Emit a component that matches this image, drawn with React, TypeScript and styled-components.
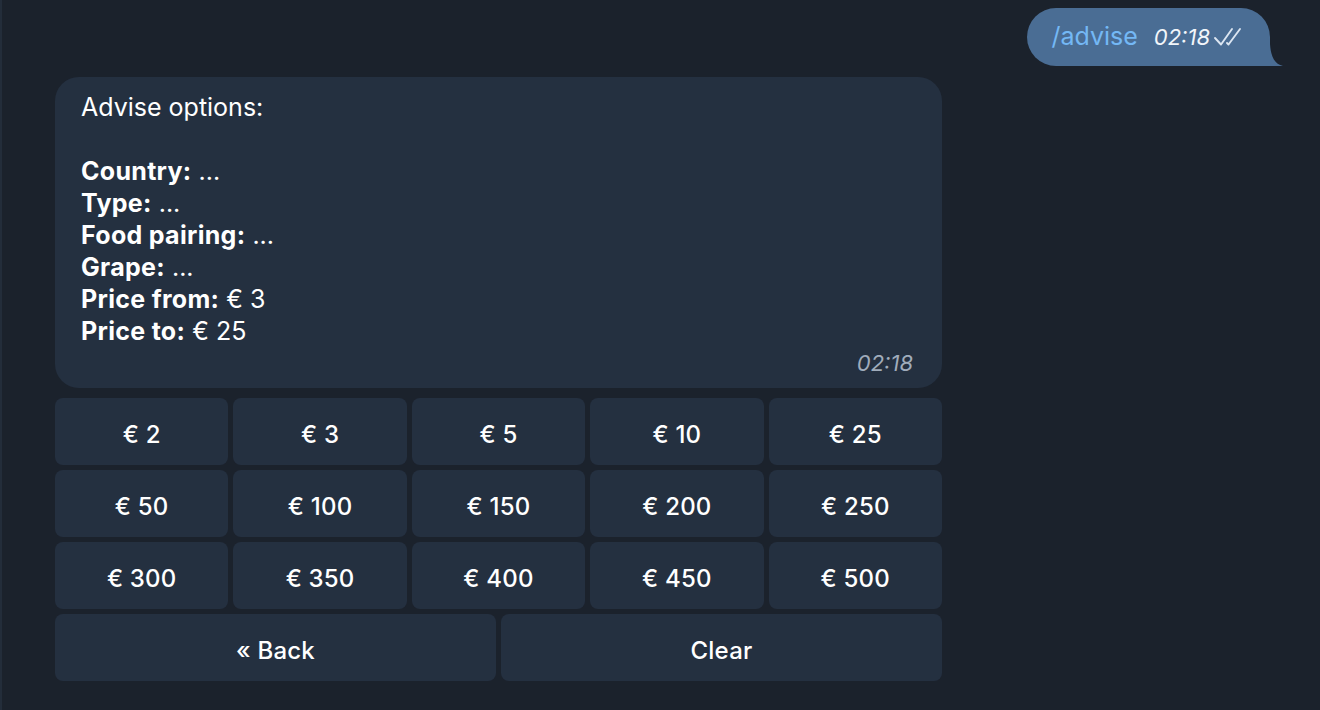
import React from "react";
import styled, { createGlobalStyle } from "styled-components";

const GlobalStyle = createGlobalStyle`
  html, body {
    margin: 0;
    padding: 0;
    background: #1b222c;
  }
  body {
    font-family: Inter, "Noto Sans", "Liberation Sans", sans-serif;
    color: #ffffff;
  }
`;

const prices = [
  ["€ 2", "€ 3", "€ 5", "€ 10", "€ 25"],
  ["€ 50", "€ 100", "€ 150", "€ 200", "€ 250"],
  ["€ 300", "€ 350", "€ 400", "€ 450", "€ 500"],
];

const options: [string, string][] = [
  ["Country:", "..."],
  ["Type:", "..."],
  ["Food pairing:", "..."],
  ["Grape:", "..."],
  ["Price from:", "€ 3"],
  ["Price to:", "€ 25"],
];

const App = () => {
  return (
    <Page>
      <GlobalStyle />
      <OutRow>
        <OutBubble>
          <Command>/advise</Command>
          <OutMeta>
            02:18
            <svg width="32" height="22" viewBox="0 0 32 22" fill="none">
              <path d="M3 12 L9 18.5 L20 3" stroke="#dce6f2" strokeWidth="1.9" strokeLinecap="round" strokeLinejoin="round" />
              <path d="M15 17 L16.5 18.5 L28 3" stroke="#dce6f2" strokeWidth="1.9" strokeLinecap="round" strokeLinejoin="round" />
            </svg>
          </OutMeta>
          <Tail viewBox="0 0 22 22">
            <path d="M0 0 L0 22 L22 22 C14 20 10 14 9 0 Z" fill="#4a6d94" />
          </Tail>
        </OutBubble>
      </OutRow>
      <InBlock>
        <InBubble>
          <Text>
            <Line>Advise options:</Line>
            <Line>&nbsp;</Line>
            {options.map(([k, v]) => (
              <Line key={k}>
                <b>{k}</b> {v}
              </Line>
            ))}
          </Text>
          <InTime>02:18</InTime>
        </InBubble>
        <Keyboard>
          {prices.map((row, i) => (
            <KeyRow key={i} $cols={5}>
              {row.map((p) => (
                <Key key={p}>{p}</Key>
              ))}
            </KeyRow>
          ))}
          <KeyRow $cols={2}>
            <Key>« Back</Key>
            <Key>Clear</Key>
          </KeyRow>
        </Keyboard>
      </InBlock>
    </Page>
  );
};

export default App;

const Page = styled.div`
  width: 1320px;
  height: 710px;
  box-sizing: border-box;
  border-left: 2px solid #232d3a;
  padding-top: 8px;
  display: flex;
  flex-direction: column;
  overflow: hidden;
`;
const OutRow = styled.div`
  display: flex;
  justify-content: flex-end;
  padding-right: 50px;
`;
const OutBubble = styled.div`
  position: relative;
  height: 58px;
  box-sizing: border-box;
  padding: 0 26px 0 24px;
  background: #4a6d94;
  border-radius: 29px 29px 0 29px;
  display: flex;
  align-items: center;
  gap: 16px;
`;
const Command = styled.span`
  color: #74b8f5;
  font-size: 25px;
  margin-top: -2px;
`;
const OutMeta = styled.span`
  display: flex;
  align-items: center;
  gap: 2px;
  font-size: 22px;
  font-style: italic;
  color: #f2f6fa;
  svg {
    margin-top: -1px;
  }
`;
const Tail = styled.svg`
  position: absolute;
  right: -13px;
  bottom: 0;
  width: 22px;
  height: 22px;
`;
const InBlock = styled.div`
  width: 887px;
  margin: 11px 0 0 53px;
  display: flex;
  flex-direction: column;
  gap: 10px;
`;
const InBubble = styled.div`
  background: #243040;
  border-radius: 24px;
  padding: 14px 29px 11px 26px;
  display: flex;
  flex-direction: column;
`;
const Text = styled.div`
  font-size: 25px;
  line-height: 32px;
  b {
    font-weight: 700;
    letter-spacing: 0.3px;
  }
`;
const Line = styled.div``;
const InTime = styled.div`
  align-self: flex-end;
  font-size: 22px;
  font-style: italic;
  line-height: 28px;
  color: #a0acbb;
  margin-top: 2px;
`;
const Keyboard = styled.div`
  display: flex;
  flex-direction: column;
  gap: 5px;
`;
const KeyRow = styled.div<{ $cols: number }>`
  display: grid;
  grid-template-columns: repeat(${(p) => p.$cols}, 1fr);
  gap: 5px;
`;
const Key = styled.div`
  height: 67px;
  border-radius: 8px;
  background: #243040;
  display: flex;
  align-items: center;
  justify-content: center;
  padding-top: 5px;
  box-sizing: border-box;
  font-size: 24px;
  font-weight: 500;
  letter-spacing: 0.2px;
  color: #ffffff;
`;
